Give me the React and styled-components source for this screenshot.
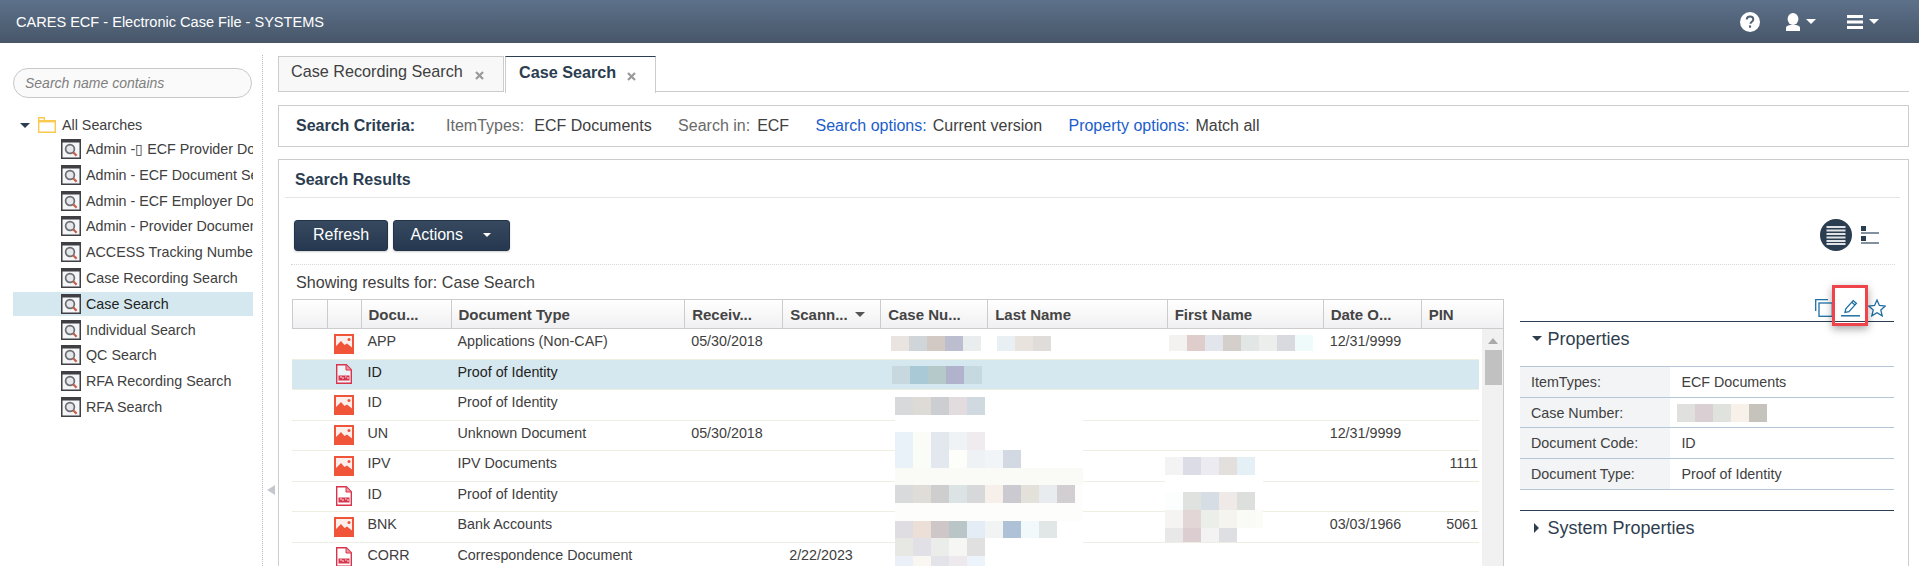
import React from 'react';
import styled, { createGlobalStyle } from 'styled-components';

const GlobalStyle = createGlobalStyle`
  html, body {
    margin: 0;
    height: 100%;
    overflow: hidden;
    background: #fff;
    font-family: "Liberation Sans", Arial, sans-serif;
    color: #404040;
  }
  * { box-sizing: border-box; }
`;

const Page = styled.div`
  display: flex;
  flex-direction: column;
  width: 1919px;
  height: 566px;
  overflow: hidden;
`;

const Header = styled.header`
  flex: none;
  display: flex;
  align-items: center;
  justify-content: space-between;
  height: 43px;
  padding: 0 40px 0 16px;
  background: linear-gradient(#5d718a, #475669);
  color: #fff;
  font-size: 14.55px;
`;

const HeaderTools = styled.div`
  display: flex;
  align-items: center;
  gap: 26px;
`;

const HeaderTool = styled.div`
  display: flex;
  align-items: center;
  gap: 6px;

  &:last-child {
    margin-left: 5px;
  }
`;

const Caret = styled.span`
  display: inline-block;
  flex: none;
  width: 0;
  height: 0;
  border-left: ${p => p.$size || 5}px solid transparent;
  border-right: ${p => p.$size || 5}px solid transparent;
  border-top: ${p => p.$size || 5}px solid ${p => p.$color || '#fff'};
`;

const Body = styled.div`
  flex: 1;
  display: flex;
  position: relative;
  min-height: 0;
`;

const Sidebar = styled.aside`
  flex: none;
  width: 263px;
  margin-top: 12px;
  padding-top: 13px;
  border-right: 1px dotted #b9b9b9;
`;

const SearchBox = styled.div`
  display: flex;
  align-items: center;
  width: 239px;
  height: 30px;
  margin-left: 13px;
  padding-left: 11px;
  border: 1px solid #c8c8c8;
  border-radius: 15px;
  background: #fafafa;
  color: #808080;
  font-size: 14px;
  font-style: italic;
`;

const Tree = styled.div`
  display: flex;
  flex-direction: column;
  margin: 15px 0 0 13px;
  width: 240px;
  font-size: 14.3px;
`;

const TreeRoot = styled.div`
  display: flex;
  align-items: center;
  height: 24px;
  padding-left: 7px;
`;

const FolderSlot = styled.span`
  display: flex;
  margin: 0 6px 0 8px;
`;

const TreeItems = styled.div`
  display: flex;
  flex-direction: column;
  gap: 1.8px;
`;

const TreeItem = styled.div`
  display: flex;
  align-items: center;
  gap: 5px;
  height: 24px;
  padding-left: 48px;
  overflow: hidden;
  white-space: nowrap;
  background: ${p => (p.$active ? '#d6e8ef' : 'transparent')};
  color: ${p => (p.$active ? '#222' : '#404040')};

  svg {
    flex: none;
  }
`;

const Splitter = styled.span`
  position: absolute;
  left: 267px;
  top: 442px;
  width: 0;
  height: 0;
  border-top: 5.5px solid transparent;
  border-bottom: 5.5px solid transparent;
  border-right: 8px solid #c4c8cc;
`;

const Main = styled.main`
  flex: 1;
  min-width: 0;
  padding: 13px 10px 0 15px;
  display: flex;
  flex-direction: column;
`;

const TabStrip = styled.div`
  flex: none;
  display: flex;
  align-items: flex-start;
  height: 36px;
`;

const Tab = styled.div`
  display: flex;
  align-items: center;
  height: ${p => (p.$active ? 37 : 36)}px;
  width: ${p => p.$width}px;
  margin-right: ${p => (p.$active ? 0 : 1)}px;
  padding: 0 0 5px ${p => (p.$active ? 13 : 12)}px;
  border: 1px solid #ccc;
  border-top-color: ${p => (p.$active ? '#2b3d50' : '#ccc')};
  border-bottom: ${p => (p.$active ? 'none' : '1px solid #ccc')};
  background: ${p => (p.$active ? '#fff' : '#f8f8f8')};
  font-size: 16.2px;
  font-weight: ${p => (p.$active ? 700 : 400)};
  color: ${p => (p.$active ? '#2b3d50' : '#404040')};
  position: relative;
  z-index: 1;
`;

const TabClose = styled.svg`
  flex: none;
  margin: 7px 0 0 ${p => p.$gap}px;
  width: 9px;
  height: 9px;
`;

const TabFill = styled.div`
  flex: 1;
  height: 36px;
  border-bottom: 1px solid #ccc;
`;

const CriteriaPanel = styled.section`
  flex: none;
  display: flex;
  align-items: center;
  gap: 26.4px;
  height: 42px;
  margin-top: 13px;
  padding-left: 17px;
  border: 1px solid #ccc;
  font-size: 16px;
`;

const CriteriaTitle = styled.strong`
  margin-right: 4.5px;
  color: #2b3d50;
`;

const Field = styled.span`
  display: flex;
  gap: ${p => p.$gap || 6}px;
  white-space: nowrap;
`;

const FieldLabel = styled.span`
  color: ${p => (p.$link ? '#1a5dcc' : '#6a6a6a')};
`;

const ResultsPanel = styled.section`
  flex: 1;
  min-height: 0;
  margin-top: 12px;
  border: 1px solid #ccc;
  border-bottom: none;
  display: flex;
  flex-direction: column;
  overflow: hidden;
`;

const ResultsTitle = styled.h2`
  flex: none;
  display: flex;
  align-items: center;
  height: 38px;
  margin: 0 8px 0 6px;
  padding: 2px 0 0 10px;
  border-bottom: 1px solid #e4e4e4;
  color: #2b3d50;
  font-size: 16px;
  font-weight: 700;
`;

const Toolbar = styled.div`
  flex: none;
  display: flex;
  align-items: center;
  justify-content: space-between;
  height: 67px;
  margin: 0 13px 0 12px;
  padding: 8px 16px 0 3px;
  border-bottom: 1px dotted #d8d8d8;
`;

const ButtonGroup = styled.div`
  display: flex;
  gap: 5px;
`;

const Button = styled.button`
  display: flex;
  align-items: center;
  gap: 20px;
  height: 31px;
  padding: 0 ${p => (p.$menu ? 18 : 17.5)}px 0 ${p => (p.$menu ? 17 : 18)}px;
  border: 1px solid #22344a;
  border-radius: 3px;
  background: linear-gradient(#36495f, #25384f);
  color: #fff;
  font-family: inherit;
  font-size: 16px;
  box-shadow: 0 1px 2px rgba(0, 0, 0, 0.2);
`;

const ViewToggle = styled.div`
  display: flex;
  align-items: center;
  gap: 9.5px;
`;

const ResultsFor = styled.div`
  flex: none;
  height: 34px;
  padding: 8px 0 0 17px;
  font-size: 16.1px;
  line-height: 18px;
`;

const Split = styled.div`
  flex: 1;
  min-height: 0;
  display: flex;
  gap: 15.5px;
  padding-left: 12.5px;
`;

const COLUMNS = '35px 34px 90px 233.7px 98px 98px 107px 179.5px 156px 98px';

const Grid = styled.div`
  flex: none;
  width: 1212.5px;
  display: flex;
  flex-direction: column;
  border-right: 1px solid #ccc;
`;

const GridHead = styled.div`
  flex: none;
  display: grid;
  grid-template-columns: ${COLUMNS} 1fr;
  height: 30px;
  border: 1px solid #ccc;
  border-right: none;
  background: linear-gradient(#fff, #f0f0f2);
  color: #444;
  font-size: 15px;
  font-weight: 700;
`;

const HeadCell = styled.div`
  display: flex;
  align-items: center;
  gap: 7px;
  padding-left: 7px;
  border-right: 1px solid #ccc;
  white-space: nowrap;

  &:last-child {
    border-right: none;
  }
`;

const GridBody = styled.div`
  flex: 1;
  min-height: 0;
  display: flex;
  position: relative;
  overflow: hidden;
`;

const Rows = styled.div`
  flex: none;
  width: 1187.5px;
`;

const Row = styled.div`
  display: grid;
  grid-template-columns: ${COLUMNS} 1fr;
  align-items: center;
  height: 30.5px;
  border-bottom: 1px solid #eeeee2;
  background: ${p => (p.$selected ? '#d6e8ef' : 'transparent')};
  color: ${p => (p.$selected ? '#222' : '#404040')};
  font-size: 14.3px;
  white-space: nowrap;
`;

const Cell = styled.div`
  padding: 0 ${p => (p.$right ? 1 : 0)}px 5px 7px;
  text-align: ${p => (p.$right ? 'right' : 'left')};
`;

const IconCell = styled.div`
  display: flex;
  justify-content: center;
`;

const Scrollbar = styled.div`
  flex: none;
  width: 22px;
  margin-left: 3px;
  padding-top: 9px;
  background: #f1f1f1;
  display: flex;
  flex-direction: column;
  align-items: center;
  gap: 6px;
`;

const ScrollUp = styled.span`
  width: 0;
  height: 0;
  border-left: 5px solid transparent;
  border-right: 5px solid transparent;
  border-bottom: 6px solid #a9a9a9;
`;

const ScrollThumb = styled.span`
  width: 17px;
  height: 35px;
  background: #c1c1c1;
`;

const Mosaic = styled.div`
  position: absolute;
  left: ${p => p.$x}px;
  top: ${p => p.$y}px;
  width: ${p => p.$w}px;
`;

const MosaicRow = styled.div`
  display: flex;
  height: ${p => p.$h}px;
  background: ${p => p.$bg || 'transparent'};
`;

const MosaicCell = styled.span`
  flex: none;
  width: 18px;
  height: 100%;
  background: ${p => p.$c};
`;

const Side = styled.div`
  flex: none;
  width: 374.5px;
  margin-top: -1px;
`;

const SideIcons = styled.div`
  display: flex;
  justify-content: flex-end;
  gap: 8px;
  height: 24px;
  padding: 1px 8px 0 0;
  border-bottom: 1px solid #2b3d50;
`;

const Highlighted = styled.div`
  position: relative;
  display: flex;
`;

const HighlightBox = styled.span`
  position: absolute;
  left: -9px;
  right: -8px;
  top: -14px;
  bottom: -5px;
  border: 3px solid #f0444c;
  box-shadow: 0 3px 8px rgba(0, 0, 0, 0.35);
`;

const SectionTitle = styled.div`
  display: flex;
  align-items: ${p => (p.$top ? 'flex-start' : 'center')};
  gap: 7px;
  height: ${p => p.$h}px;
  padding: ${p => p.$pad}px 0 0 13px;
  color: #2f3e4f;
  font-size: 18px;
  line-height: 22px;
`;

const Arrow = styled.span`
  flex: none;
  align-self: ${p => (p.$top ? 'flex-start' : 'center')};
  width: 8px;
  margin-top: ${p => (p.$top ? 8 : 0)}px;
  display: flex;
  justify-content: center;
`;

const ArrowRight = styled.span`
  width: 0;
  height: 0;
  border-top: 5px solid transparent;
  border-bottom: 5px solid transparent;
  border-left: 5px solid #2f3e4f;
`;

const PropTable = styled.div`
  display: grid;
  grid-template-columns: 150.4px 1fr;
  border-top: 1px solid #b5c7d6;
  font-size: 14.3px;
`;

const PropLabel = styled.div`
  display: flex;
  align-items: center;
  height: ${p => p.$h}px;
  padding-left: 11.5px;
  background: #f2f4f5;
  border-bottom: 1px solid #b5c7d6;
`;

const PropValue = styled.div`
  display: flex;
  align-items: center;
  height: ${p => p.$h}px;
  padding-left: 11.5px;
  border-bottom: 1px solid #b5c7d6;
`;

const InlineMosaic = styled.div`
  display: flex;
  height: 18px;
  margin-left: -4.5px;
`;

const SystemSection = styled.div`
  margin-top: 20px;
  border-top: 1px solid #2b3d50;
`;

const HelpIcon = () => (
  <svg width="20" height="20" viewBox="0 0 20 20">
    <circle cx="10" cy="10" r="10" fill="#fff" />
    <path d="M6.8 7.6c0-2 1.400-3.200 3.300-3.200s3.200 1.100 3.200 2.800c0 1.400-.8 2.100-1.800 2.800-.7.5-1 .9-1 1.800" fill="none" stroke="#4f6077" strokeWidth="2" />
    <rect x="9" y="13.400" width="2.100" height="2.300" fill="#4f6077" />
  </svg>
);

const UserIcon = () => (
  <svg width="14" height="18" viewBox="0 0 14 18">
    <ellipse cx="7" cy="6" rx="5.400" ry="6" fill="#fff" />
    <path d="M0 18v-3.200c0-1.600 1.600-2.400 4-2.800h6c2.400.4 4 1.200 4 2.800V18z" fill="#fff" />
  </svg>
);

const MenuIcon = () => (
  <svg width="16" height="14" viewBox="0 0 16 14">
    <rect width="16" height="3" fill="#fff" />
    <rect y="5.500" width="16" height="3" fill="#fff" />
    <rect y="11" width="16" height="3" fill="#fff" />
  </svg>
);

const FolderIcon = () => (
  <svg width="18" height="16" viewBox="0 0 18 16">
    <path d="M.7.700h5.600v3h11v11.600H.7z" fill="#fff" stroke="#fcc94f" strokeWidth="1.400" />
    <rect x="1" y="3" width="16" height="2.400" fill="#fcc94f" />
  </svg>
);

const SearchDocIcon = () => (
  <svg width="20" height="20" viewBox="0 0 20 20">
    <rect width="20" height="20" fill="#3f3f44" />
    <rect x="1.500" y="3.500" width="17" height="15" fill="#f4f6f7" />
    <circle cx="9" cy="10" r="4.400" fill="#e4e8ea" stroke="#6d6d72" strokeWidth="1.700" />
    <path d="M12.200 13.200l3.400 3.600" stroke="#c4604a" strokeWidth="2.200" />
  </svg>
);

const ImageFileIcon = () => (
  <svg width="20" height="20" viewBox="0 0 20 20">
    <rect width="20" height="20" fill="#f0553a" />
    <rect x="2" y="2" width="16" height="14" fill="#fdf0ec" />
    <path d="M2 16v-4l5-5 3.500 4 2.500-1.500 5 4V16z" fill="#f0553a" />
    <circle cx="15" cy="5.500" r="1.500" fill="#f0553a" />
  </svg>
);

const PdfFileIcon = () => (
  <svg width="16" height="20" viewBox="0 0 16 20">
    <path d="M.7.700h9.600l5 5v13.600H.7z" fill="#fff" fillOpacity=".55" stroke="#d8344c" strokeWidth="1.400" />
    <path d="M10 1v5h5" fill="#f09aa6" stroke="#d8344c" />
    <rect x="2.500" y="11.500" width="11" height="5" fill="#d8344c" />
    <path d="M4 13h2M7 13v2M9 13h1.500M12 13v2" stroke="#fff" strokeWidth=".9" />
  </svg>
);

const CloseGlyph = ({ gap }) => (
  <TabClose $gap={gap} viewBox="0 0 9 9">
    <path d="M1 1l7 7M8 1L1 8" stroke="#999" strokeWidth="2.200" />
  </TabClose>
);

const TableViewIcon = () => (
  <svg width="32" height="32" viewBox="0 0 32 32">
    <circle cx="16" cy="16" r="16" fill="#2b3d50" />
    <path d="M6.500 8h19M6.500 11.500h19M6.500 15h19M6.500 18.500h19M6.500 22h19M6.500 25h19" stroke="#dfe3e6" strokeWidth="1.800" />
  </svg>
);

const TreeViewIcon = () => (
  <svg width="18" height="18" viewBox="0 0 18 18">
    <rect width="5" height="5" fill="#2b3d50" />
    <rect y="10" width="5" height="5" fill="#2b3d50" />
    <path d="M0 7h18M0 17h18" stroke="#5b6c7d" strokeWidth="1.500" />
  </svg>
);

const CopyIcon = () => (
  <svg width="18" height="18" viewBox="0 0 18 18" fill="none" stroke="#1f6fa3" strokeWidth="1.300">
    <path d="M.7 12V.7H13" />
    <rect x="4" y="4" width="13.300" height="13.300" />
  </svg>
);

const PencilIcon = () => (
  <svg width="19" height="18" viewBox="0 0 19 18" fill="none" stroke="#1f6fa3" strokeWidth="1.300">
    <path d="M4 13.500l.8-3.700L12.200 1.600l3.200 2.800-7.500 8.200z" />
    <path d="M10.800 3.200l3.200 2.800" />
    <path d="M0 16.800h19" strokeWidth="1.500" />
  </svg>
);

const StarIcon = () => (
  <svg width="18" height="18" viewBox="0 0 18 18" fill="none" stroke="#1f6fa3" strokeWidth="1.300">
    <path d="M9 1l2.400 5.500 5.900.6-4.500 3.900 1.400 5.900L9 13.800l-5.200 3.100 1.400-5.900L.7 7.100l5.900-.6z" />
  </svg>
);

const searches = [
  'Admin -▯ ECF Provider Do',
  'Admin - ECF Document Se',
  'Admin - ECF Employer Do',
  'Admin - Provider Documen',
  'ACCESS Tracking Numbe',
  'Case Recording Search',
  'Case Search',
  'Individual Search',
  'QC Search',
  'RFA Recording Search',
  'RFA Search',
];

const headers = ['', '', 'Docu...', 'Document Type', 'Receiv...', 'Scann...', 'Case Nu...', 'Last Name', 'First Name', 'Date O...', 'PIN'];

const rows = [
  { kind: 'image', code: 'APP', type: 'Applications (Non-CAF)', received: '05/30/2018', date: '12/31/9999' },
  { kind: 'pdf', code: 'ID', type: 'Proof of Identity', selected: true },
  { kind: 'image', code: 'ID', type: 'Proof of Identity' },
  { kind: 'image', code: 'UN', type: 'Unknown Document', received: '05/30/2018', date: '12/31/9999' },
  { kind: 'image', code: 'IPV', type: 'IPV Documents', pin: '1111' },
  { kind: 'pdf', code: 'ID', type: 'Proof of Identity' },
  { kind: 'image', code: 'BNK', type: 'Bank Accounts', date: '03/03/1966', pin: '5061' },
  { kind: 'pdf', code: 'CORR', type: 'Correspondence Document', scanned: '2/22/2023' },
];

// blurred-out values that sit over the grid, coordinates inside GridBody
const mosaics = [
  { x: 599.5, y: 7, w: 90, rows: [[15, null, ['#e9e4e0', '#cfd5d8', '#d3c9c4', '#bdbdd0', '#e9edee']]] },
  { x: 705.5, y: 7, w: 54, rows: [[15, null, ['#e9f0f3', '#e8e3dc', '#e0dcd9']]] },
  { x: 877.5, y: 6, w: 144, rows: [[16, null, ['#f3f2f1', '#dfcdcc', '#e3e5ec', '#d5cfcc', '#e2e7e5', '#eceeec', '#d9d9e0', '#effafb']]] },
  { x: 600, y: 37, w: 90, rows: [[18, null, ['#c7d8df', '#a9c9d7', '#b5c8ca', '#b1b3cd', '#c5d9e1']]] },
  {
    x: 603.5,
    y: 68,
    w: 188,
    rows: [
      [18, '#fff', ['#d8d9db', '#dedad5', '#cdced2', '#e3dcdf', '#d0d8e0']],
      [17, '#fff', []],
      [18, '#fff', ['#eaf2f9', '#fbfcf8', '#e2e8ed', '#f0f3f6', '#efebee']],
      [18, '#fff', ['#eaf2f9', '#fafcf8', '#e2e8ed', '#fdfdfa', '#eff2f4', '#f1f5f8', '#d2d9e2']],
      [17, '#fafbf6', []],
      [18, '#fdfdfb', ['#d9dadc', '#e0dcd8', '#cecece', '#dbe3e5', '#d6d8d9', '#f6efea', '#cbcad1', '#e3e1d9', '#e8ecef', '#d3ced1']],
      [18, '#fdfdfb', []],
      [17, '#fff', ['#dfdde2', '#ecdfd8', '#cfc6c7', '#bac5c8', '#e4edf6', '#f2f4f4', '#aec1d6', '#f1f9fb', '#e1e7e7']],
      [18, '#fff', ['#e7e7e3', '#e1e0e7', '#ebedea', '#f6f6f4', '#e0e0e0']],
      [11, '#fff', ['#ebeff7', '#faf7f2', '#e3e4ea', '#eee9ed', '#ecf3fb']],
    ],
  },
  {
    x: 873.5,
    y: 128,
    w: 98,
    rows: [
      [18, null, ['#f3f3f3', '#dcdce6', '#ecebf1', '#e2dfdc', '#e5f0f6']],
      [17, '#fff', []],
      [18, '#fff', ['#fcfdfd', '#dfe2df', '#d6dde5', '#efe9e7', '#dcdfdc']],
      [18, '#fbfbf8', ['#f6f4f2', '#e3d6d7', '#eceee9', '#f6f4ee', '#fafbf7']],
      [14, '#fff', ['#e8e8e8', '#dbcdd0', '#f3f3f3', '#dedfe3']],
    ],
  },
];

const caseNumberCells = ['#e0e0de', '#dad0d3', '#e0e2de', '#f8f1ea', '#c6c3bd'];

const App = () => {
  return (
    <Page>
      <GlobalStyle />
      <Header>
        <span>CARES ECF - Electronic Case File - SYSTEMS</span>
        <HeaderTools>
          <HelpIcon />
          <HeaderTool>
            <UserIcon />
            <Caret />
          </HeaderTool>
          <HeaderTool>
            <MenuIcon />
            <Caret />
          </HeaderTool>
        </HeaderTools>
      </Header>
      <Body>
        <Sidebar>
          <SearchBox>Search name contains</SearchBox>
          <Tree>
            <TreeRoot>
              <Caret $color="#2b3d50" />
              <FolderSlot>
                <FolderIcon />
              </FolderSlot>
              <span>All Searches</span>
            </TreeRoot>
            <TreeItems>
              {searches.map(name => (
                <TreeItem key={name} $active={name === 'Case Search'}>
                  <SearchDocIcon />
                  <span>{name}</span>
                </TreeItem>
              ))}
            </TreeItems>
          </Tree>
        </Sidebar>
        <Splitter />
        <Main>
          <TabStrip>
            <Tab $width={226}>
              Case Recording Search
              <CloseGlyph gap={12} />
            </Tab>
            <Tab $active $width={151}>
              Case Search
              <CloseGlyph gap={11} />
            </Tab>
            <TabFill />
          </TabStrip>
          <CriteriaPanel>
            <CriteriaTitle>Search Criteria:</CriteriaTitle>
            <Field $gap={10}>
              <FieldLabel>ItemTypes:</FieldLabel>
              <span>ECF Documents</span>
            </Field>
            <Field $gap={7}>
              <FieldLabel>Search in:</FieldLabel>
              <span>ECF</span>
            </Field>
            <Field>
              <FieldLabel $link>Search options:</FieldLabel>
              <span>Current version</span>
            </Field>
            <Field>
              <FieldLabel $link>Property options:</FieldLabel>
              <span>Match all</span>
            </Field>
          </CriteriaPanel>
          <ResultsPanel>
            <ResultsTitle>Search Results</ResultsTitle>
            <Toolbar>
              <ButtonGroup>
                <Button>Refresh</Button>
                <Button $menu>
                  Actions
                  <Caret $size={4.5} />
                </Button>
              </ButtonGroup>
              <ViewToggle>
                <TableViewIcon />
                <TreeViewIcon />
              </ViewToggle>
            </Toolbar>
            <ResultsFor>Showing results for: Case Search</ResultsFor>
            <Split>
              <Grid>
                <GridHead>
                  {headers.map((title, i) => (
                    <HeadCell key={i}>
                      {title}
                      {title === 'Scann...' && <Caret $color="#555" />}
                    </HeadCell>
                  ))}
                </GridHead>
                <GridBody>
                  <Rows>
                    {rows.map((row, i) => (
                      <Row key={i} $selected={row.selected}>
                        <span />
                        <IconCell>{row.kind === 'image' ? <ImageFileIcon /> : <PdfFileIcon />}</IconCell>
                        <Cell>{row.code}</Cell>
                        <Cell>{row.type}</Cell>
                        <Cell>{row.received}</Cell>
                        <Cell>{row.scanned}</Cell>
                        <span />
                        <span />
                        <span />
                        <Cell>{row.date}</Cell>
                        <Cell $right>{row.pin}</Cell>
                      </Row>
                    ))}
                  </Rows>
                  <Scrollbar>
                    <ScrollUp />
                    <ScrollThumb />
                  </Scrollbar>
                  {mosaics.map((m, i) => (
                    <Mosaic key={i} $x={m.x} $y={m.y} $w={m.w}>
                      {m.rows.map(([h, bg, cells], j) => (
                        <MosaicRow key={j} $h={h} $bg={bg}>
                          {cells.map((c, k) => (
                            <MosaicCell key={k} $c={c} />
                          ))}
                        </MosaicRow>
                      ))}
                    </Mosaic>
                  ))}
                </GridBody>
              </Grid>
              <Side>
                <SideIcons>
                  <CopyIcon />
                  <Highlighted>
                    <PencilIcon />
                    <HighlightBox />
                  </Highlighted>
                  <StarIcon />
                </SideIcons>
                <SectionTitle $h={44} $pad={6} $top>
                  <Arrow $top>
                    <Caret $color="#2f3e4f" />
                  </Arrow>
                  Properties
                </SectionTitle>
                <PropTable>
                  <PropLabel $h={31}>ItemTypes:</PropLabel>
                  <PropValue $h={31}>ECF Documents</PropValue>
                  <PropLabel $h={30}>Case Number:</PropLabel>
                  <PropValue $h={30}>
                    <InlineMosaic>
                      {caseNumberCells.map((c, k) => (
                        <MosaicCell key={k} $c={c} />
                      ))}
                    </InlineMosaic>
                  </PropValue>
                  <PropLabel $h={31}>Document Code:</PropLabel>
                  <PropValue $h={31}>ID</PropValue>
                  <PropLabel $h={31}>Document Type:</PropLabel>
                  <PropValue $h={31}>Proof of Identity</PropValue>
                </PropTable>
                <SystemSection>
                  <SectionTitle $h={33} $pad={0}>
                    <Arrow>
                      <ArrowRight />
                    </Arrow>
                    System Properties
                  </SectionTitle>
                </SystemSection>
              </Side>
            </Split>
          </ResultsPanel>
        </Main>
      </Body>
    </Page>
  );
};

export default App;
